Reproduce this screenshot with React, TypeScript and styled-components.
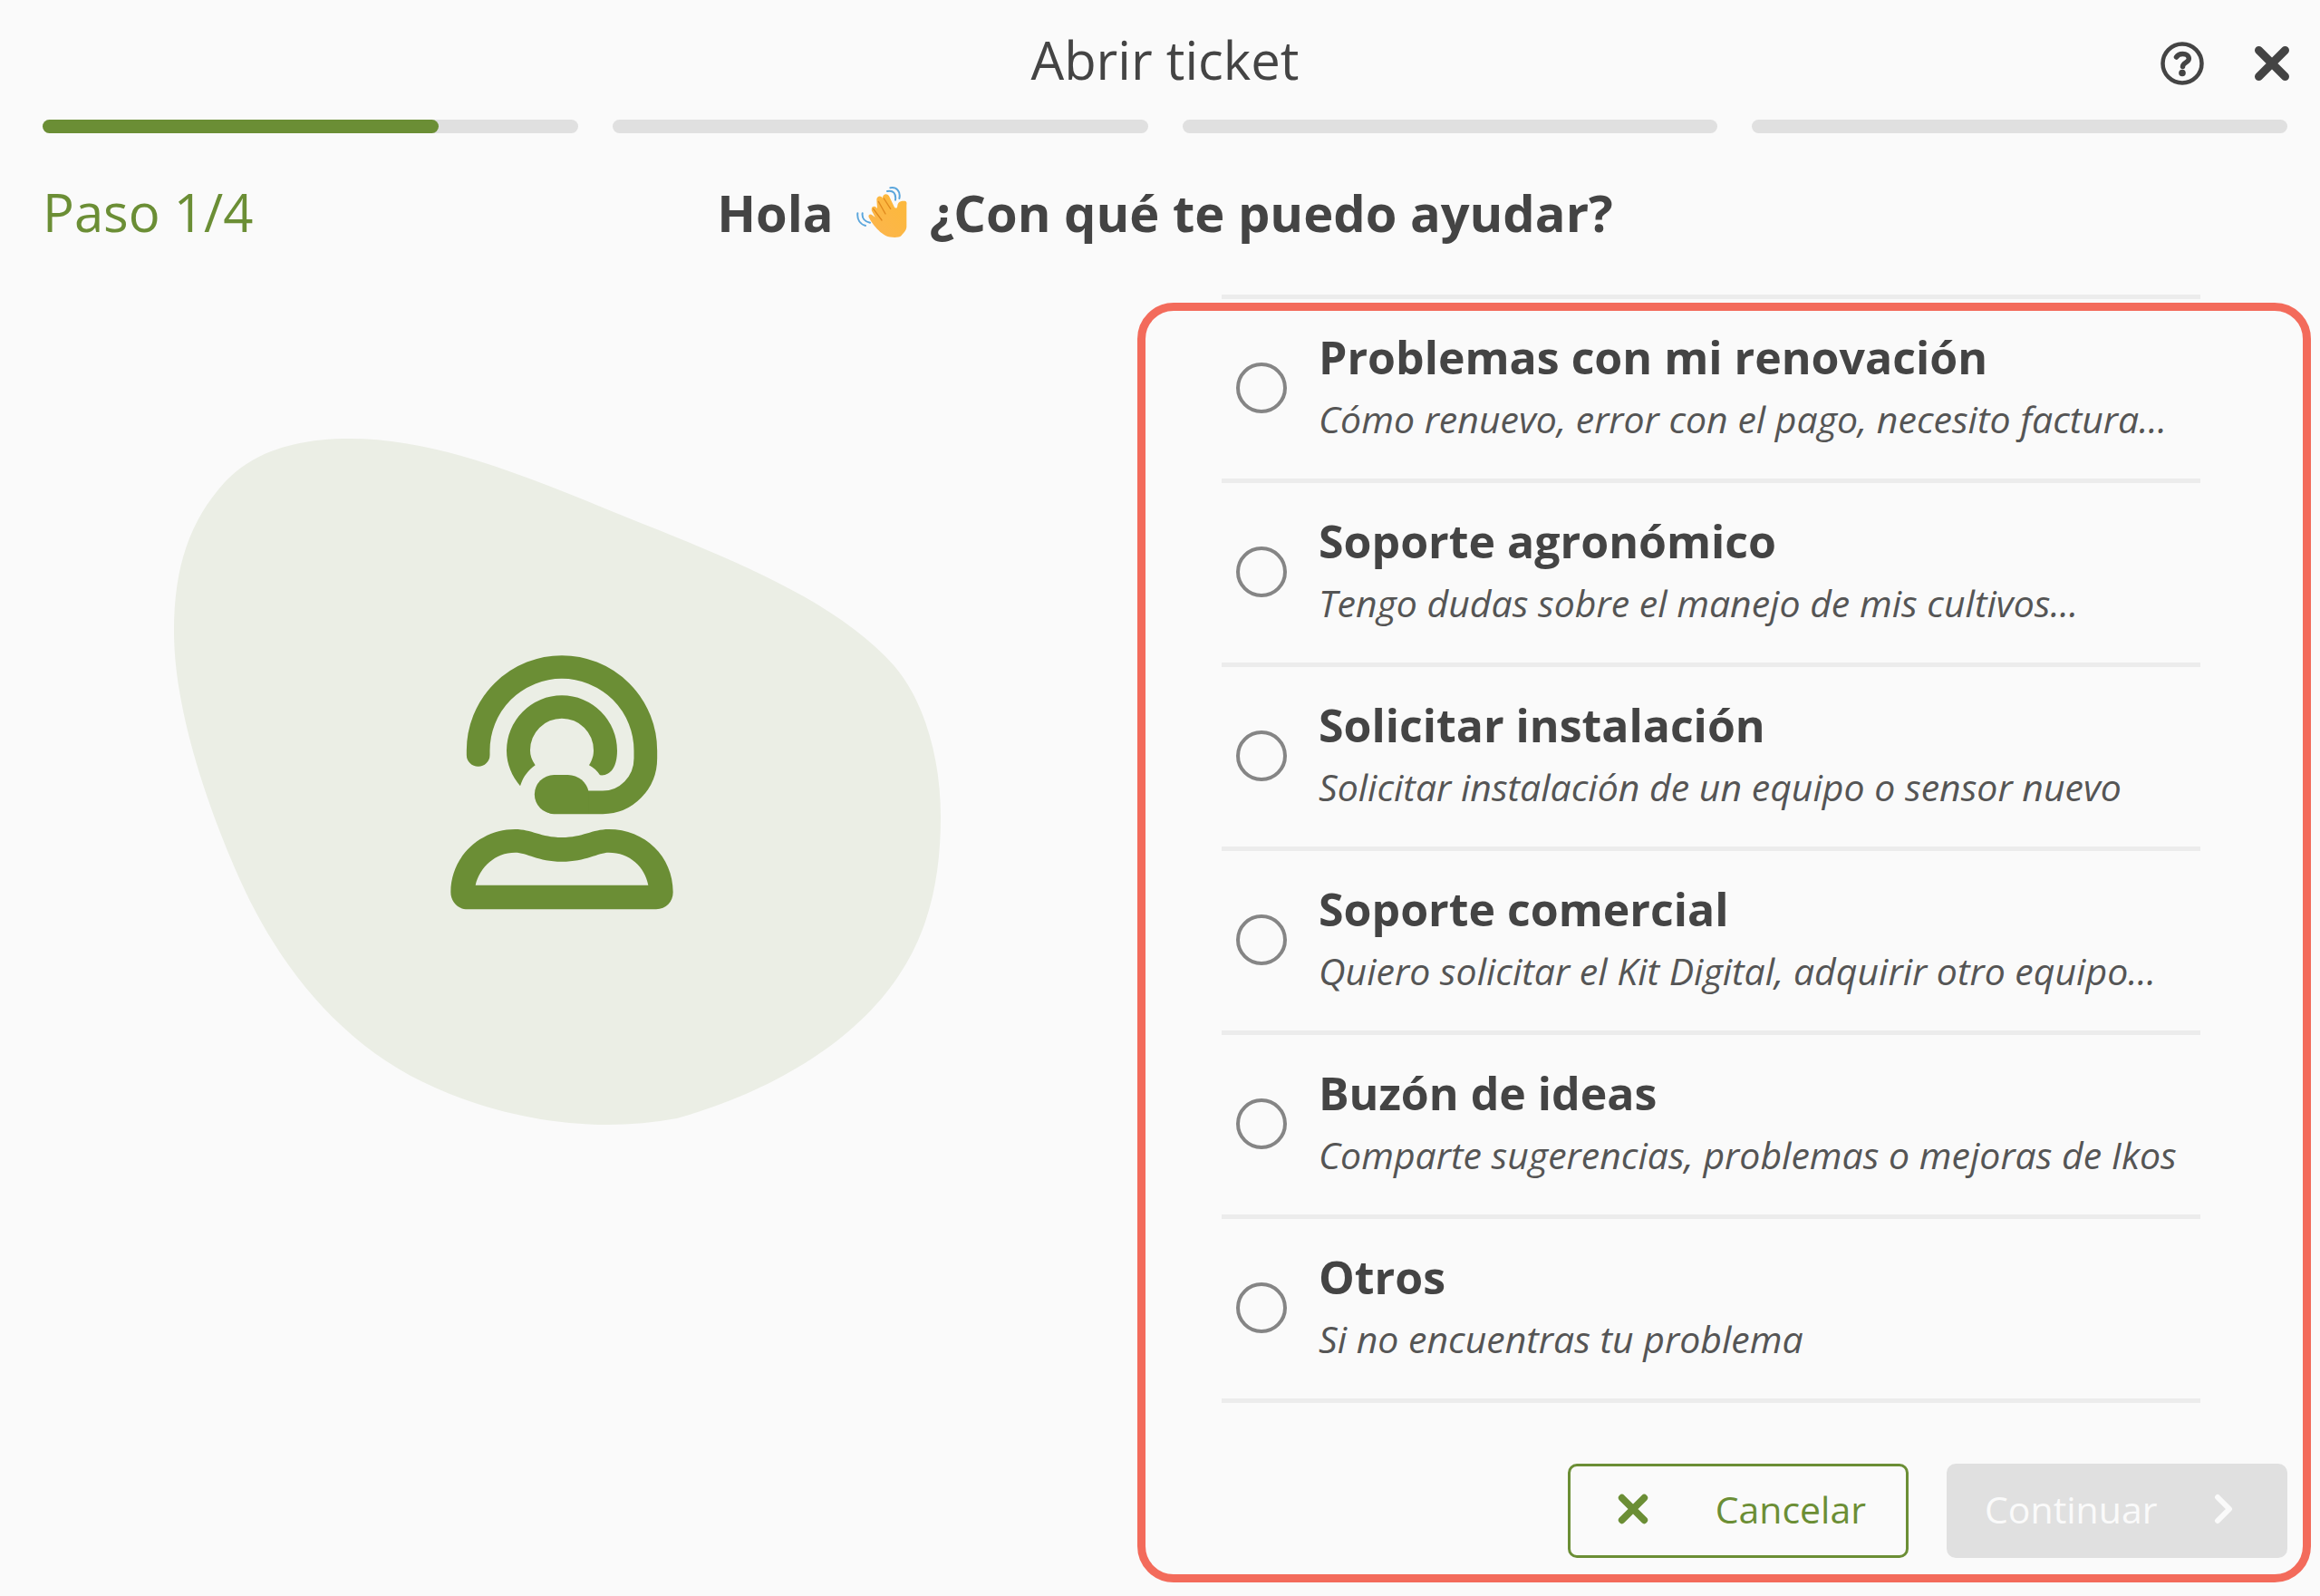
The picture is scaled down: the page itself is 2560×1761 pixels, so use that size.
import React, { useState } from "react";
import styled, { createGlobalStyle } from "styled-components";

const GREEN = "#6b8e35";
const INK = "#444444";
const PAPER = "#fafafa";
const LINE = "#ececec";
const MUTED = "#e0e0e0";
const CORAL = "#f36b5b";

const GlobalStyle = createGlobalStyle`
  *, *::before, *::after { box-sizing: border-box; }
  body {
    margin: 0;
    background: ${PAPER};
    color: ${INK};
    font-family: "Open Sans", "Noto Sans", sans-serif;
  }
`;

const Dialog = styled.main`
  min-height: 100vh;
  padding: 32px 36px 42px 47px;
  display: flex;
  flex-direction: column;
  background: ${PAPER};
`;

const Header = styled.header`
  display: grid;
  grid-template-columns: 1fr auto 1fr;
  align-items: center;
  height: 76px;
`;

const Title = styled.h1`
  grid-column: 2;
  align-self: start;
  margin: 0;
  font-size: 58px;
  line-height: 68px;
  font-weight: 400;
`;

const HeaderActions = styled.div`
  display: flex;
  justify-content: flex-end;
  align-items: center;
  gap: 55px;
  margin-right: -3px;
`;

const IconButton = styled.button`
  display: flex;
  padding: 0;
  border: 0;
  background: none;
  color: ${INK};
  cursor: pointer;
`;

const Progress = styled.div`
  display: grid;
  grid-template-columns: repeat(4, 1fr);
  gap: 38px;
  margin-top: 24px;
`;

const Track = styled.div`
  height: 15px;
  border-radius: 8px;
  background: ${MUTED};
`;

const Fill = styled.div`
  height: 100%;
  border-radius: 8px;
  background: ${GREEN};
`;

const StepRow = styled.div`
  display: grid;
  grid-template-columns: 1fr auto 1fr;
  align-items: center;
  margin-top: 46px;
  line-height: 82px;
`;

const StepLabel = styled.span`
  color: ${GREEN};
  font-size: 58px;
`;

const Question = styled.h2`
  display: flex;
  align-items: center;
  margin: 0;
  font-size: 56px;
  font-weight: 700;
`;

const WaveIcon = styled.svg`
  width: 56px;
  height: 58px;
  margin: 0 25px;
`;

const Body = styled.div`
  flex: 1;
  display: grid;
  grid-template-columns: minmax(0, 1227fr) minmax(0, 1250fr);
  margin-top: 50px;
`;

const Illustration = styled.div`
  display: flex;
  justify-content: center;
  align-items: flex-start;
  padding: 159px 90px 0 0;
`;

const Panel = styled.section`
  position: relative;
  display: flex;
  flex-direction: column;
  justify-content: space-between;
`;

const Highlight = styled.div`
  position: absolute;
  inset: 9px -26px -27px -19px;
  border: 9px solid ${CORAL};
  border-radius: 40px;
  pointer-events: none;
`;

const Options = styled.fieldset`
  min-width: 0;
  margin: 0 96px 0 74px;
  padding: 0;
  border: 0;
  border-top: 5px solid ${LINE};
`;

const Option = styled.label`
  display: flex;
  align-items: center;
  gap: 35px;
  height: 203px;
  padding: 0 0 2px 16px;
  border-bottom: 5px solid ${LINE};
  cursor: pointer;
`;

const Radio = styled.input`
  appearance: none;
  flex: none;
  width: 56px;
  height: 56px;
  margin: 0;
  border: 4px solid #858585;
  border-radius: 50%;
  &:checked {
    border-color: ${GREEN};
    background: radial-gradient(${GREEN} 45%, transparent 50%);
  }
`;

const OptionText = styled.span`
  display: flex;
  flex-direction: column;
  white-space: nowrap;
`;

const OptionTitle = styled.strong`
  font-size: 50px;
  line-height: 68px;
  font-weight: 700;
`;

const OptionHint = styled.em`
  font-size: 41px;
  line-height: 68px;
  color: #555555;
`;

const Actions = styled.div`
  display: flex;
  justify-content: flex-end;
  gap: 42px;
`;

const ActionButton = styled.button<{ $primary?: boolean }>`
  display: flex;
  align-items: center;
  justify-content: space-between;
  width: 376px;
  height: 104px;
  padding: ${(p) => (p.$primary ? "0 56px 5px 39px" : "0 44px 5px 52px")};
  border: 3px solid ${(p) => (p.$primary ? MUTED : GREEN)};
  border-radius: 10px;
  background: ${(p) => (p.$primary ? MUTED : PAPER)};
  color: ${(p) => (p.$primary ? PAPER : GREEN)};
  font-family: inherit;
  font-size: 41px;
  line-height: 56px;
  cursor: pointer;
`;

const OPTIONS = [
  { id: "renovacion", title: "Problemas con mi renovación", hint: "Cómo renuevo, error con el pago, necesito factura..." },
  { id: "agronomico", title: "Soporte agronómico", hint: "Tengo dudas sobre el manejo de mis cultivos..." },
  { id: "instalacion", title: "Solicitar instalación", hint: "Solicitar instalación de un equipo o sensor nuevo" },
  { id: "comercial", title: "Soporte comercial", hint: "Quiero solicitar el Kit Digital, adquirir otro equipo..." },
  { id: "ideas", title: "Buzón de ideas", hint: "Comparte sugerencias, problemas o mejoras de Ikos" },
  { id: "otros", title: "Otros", hint: "Si no encuentras tu problema" },
];

const PROGRESS = [74, 0, 0, 0];

function HelpIcon() {
  return (
    <svg width="48" height="48" viewBox="0 0 48 48" fill="none" stroke="currentColor" strokeLinecap="round" aria-hidden="true">
      <circle cx="24" cy="24" r="21.5" strokeWidth="4.5" />
      <path d="M17.500 17C19 14.500 21.500 13.500 24.500 13.500C28.500 13.500 31.300 15.500 31.300 18.700C31.300 23 24.500 23 24.500 27.500" strokeWidth="5.500" />
      <circle cx="24" cy="34.500" r="3.800" fill="currentColor" stroke="none" />
    </svg>
  );
}

function CrossIcon({ size }: { size: number }) {
  return (
    <svg width={size} height={size} viewBox="0 0 40 40" fill="none" stroke="currentColor" strokeWidth="9" strokeLinecap="round" aria-hidden="true">
      <path d="M5.500 5.500L34.500 34.500M34.500 5.500L5.500 34.500" />
    </svg>
  );
}

function ChevronIcon() {
  return (
    <svg width="22" height="34" viewBox="0 0 22 34" fill="none" stroke="currentColor" strokeWidth="6" strokeLinecap="round" strokeLinejoin="round" aria-hidden="true">
      <path d="M4 4L17 17L4 30" />
    </svg>
  );
}

function WavingHand() {
  return (
    <WaveIcon viewBox="120 78 168 172" role="img" aria-label="saludo">
      <defs>
        <linearGradient id="skin" x1="0" y1="1" x2="0.7" y2="0.2">
          <stop offset="0" stopColor="#f98f5a" />
          <stop offset="0.3" stopColor="#fcb64a" />
          <stop offset="1" stopColor="#fcb83e" />
        </linearGradient>
      </defs>
      <path
        fill="url(#skin)"
        d="M161 181C158 172 166 168 174 175L182 181L171 160C167 148 178 141 186 149L189 152L187 122C188 110 202 108 207 118C206 104 222 100 228 111L246 148C252 153 255 151 256 143C257 131 266 126 280 127C287 128 287 134 286 140L286 213C285 226 277 231 268 243C262 250 231 249 218 243C197 232 174 207 161 181Z"
      />
      <path d="M176 153L204 191M193 129L216 170M211 119L233 153" fill="none" stroke="#e08a1e" strokeWidth="4" strokeLinecap="round" />
      <path d="M222 95C242 90 252 104 249 124M232 84C254 80 267 97 262 119M124 168C122 188 132 204 150 209M140 168C138 184 148 196 165 199" fill="none" stroke="#5ba6dc" strokeWidth="6" strokeLinecap="round" />
    </WaveIcon>
  );
}

function SupportIllustration() {
  return (
    <svg width="847" height="758" viewBox="0 0 847 758" role="img" aria-label="Agente de soporte">
      <path
        fill="#ebeee5"
        d="M194 0C290 0 385 40 500 87C600 127 730 176 795 251C829 291 846 355 846 417C846 480 835 540 800 592C750 668 655 722 555 750C450 770 340 745 261 703C170 653 110 570 72 485C30 390 0 290 0 213C0 140 18 90 56 48C88 14 135 0 194 0Z"
      />
      <g transform="translate(278 216) scale(0.33333)" fill={GREEN}>
        <path d="M173 399V385A277 277 0 0 1 727 385V410A142 146 0 0 1 585 556H424" fill="none" stroke={GREEN} strokeWidth="77" strokeLinecap="round" />
        <path d="M424 465H470C505 465 532 490 538 518V594H424A64.500 64.500 0 0 1 424 465Z" />
        <path d="M362 433C350 415 345 400 345 383A105 105 0 0 1 555 383C555 400 552 412 540 433C555 441 568 452 576 466C610 470 633 440 633 385A183 183 0 0 0 267 385C267 430 285 470 312 502C322 470 340 448 362 433Z" />
        <path
          fillRule="evenodd"
          d="M82 853C82 735 180 645 295 645C350 645 380 672 450 672C520 672 550 645 605 645C725 645 818 735 818 853C818 885 795 910 762 910H138C105 910 82 885 82 853ZM164 830H736C725 770 675 722 605 722C570 722 530 752 450 752C370 752 335 722 295 722C230 722 178 770 164 830Z"
        />
      </g>
    </svg>
  );
}

export default function App() {
  const [choice, setChoice] = useState("");

  return (
    <>
      <GlobalStyle />
      <Dialog>
        <Header>
          <Title>Abrir ticket</Title>
          <HeaderActions>
            <IconButton type="button" aria-label="Ayuda">
              <HelpIcon />
            </IconButton>
            <IconButton type="button" aria-label="Cerrar">
              <CrossIcon size={40} />
            </IconButton>
          </HeaderActions>
        </Header>

        <Progress>
          {PROGRESS.map((value, i) => (
            <Track key={i}>{value > 0 && <Fill style={{ width: `${value}%` }} />}</Track>
          ))}
        </Progress>

        <StepRow>
          <StepLabel>Paso 1/4</StepLabel>
          <Question>
            Hola
            <WavingHand />
            ¿Con qué te puedo ayudar?
          </Question>
        </StepRow>

        <Body>
          <Illustration>
            <SupportIllustration />
          </Illustration>
          <Panel>
            <Options aria-label="Motivo del ticket">
              {OPTIONS.map((o) => (
                <Option key={o.id}>
                  <Radio type="radio" name="motivo" value={o.id} checked={choice === o.id} onChange={() => setChoice(o.id)} />
                  <OptionText>
                    <OptionTitle>{o.title}</OptionTitle>
                    <OptionHint>{o.hint}</OptionHint>
                  </OptionText>
                </Option>
              ))}
            </Options>
            <Actions>
              <ActionButton type="button">
                <CrossIcon size={34} />
                Cancelar
              </ActionButton>
              <ActionButton type="button" $primary disabled={!choice}>
                Continuar
                <ChevronIcon />
              </ActionButton>
            </Actions>
            <Highlight />
          </Panel>
        </Body>
      </Dialog>
    </>
  );
}
